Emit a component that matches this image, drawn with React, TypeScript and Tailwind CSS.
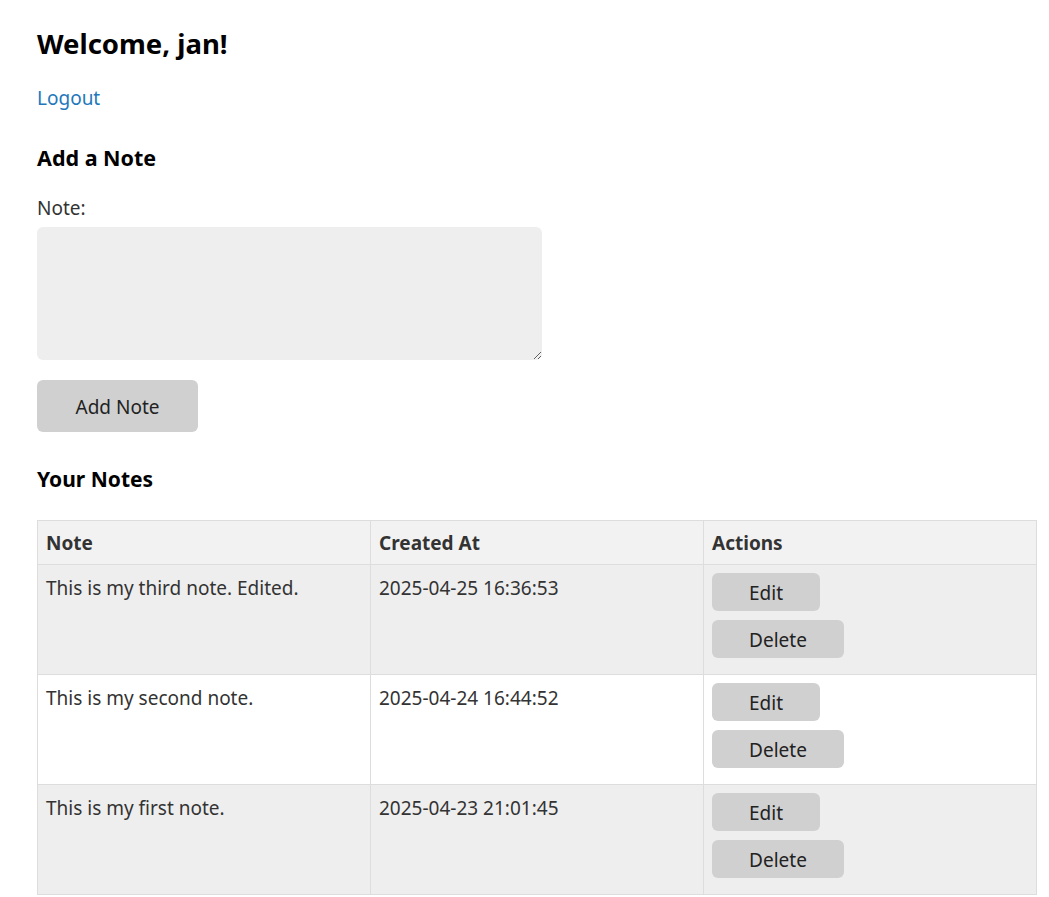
import React from "react";

const notes = [
  { text: "This is my third note. Edited.", date: "2025-04-25 16:36:53", bg: "bg-[#eeeeee]" },
  { text: "This is my second note.", date: "2025-04-24 16:44:52", bg: "bg-white" },
  { text: "This is my first note.", date: "2025-04-23 21:01:45", bg: "bg-[#eeeeee]" },
];

export default function App() {
  return (
    <div className="min-h-[897px] bg-white px-[37px] pt-[26px] text-[#333333] font-['Noto_Sans',sans-serif] text-[19px]">
      <h1 className="text-[27.5px] leading-[36px] font-bold text-black">Welcome, jan!</h1>
      <a href="#" className="mt-[24px] block w-fit text-[#2277bb] leading-[24px]">Logout</a>
      <h2 className="mt-[34px] text-[21.5px] leading-[28px] font-bold text-black">Add a Note</h2>
      <label className="mt-[24px] block leading-[24px]">Note:</label>
      <textarea className="mt-[7px] block w-[505px] h-[133px] rounded-[6px] bg-[#eeeeee] outline-none border-0 p-2" />
      <button className="mt-[20px] block w-[161px] h-[52px] pt-[3px] rounded-[6px] bg-[#d0d0d0] text-[#222222]">Add Note</button>
      <h2 className="mt-[33px] text-[21px] leading-[28px] font-bold text-black">Your Notes</h2>
      <table className="mt-[27px] w-[1000px] table-fixed border-collapse">
        <thead>
          <tr className="bg-[#f2f2f2]">
            <th className="border border-[#dddddd] px-[8px] pt-[9px] pb-[7px] text-left font-bold leading-[27px]">Note</th>
            <th className="border border-[#dddddd] px-[8px] pt-[9px] pb-[7px] text-left font-bold leading-[27px]">Created At</th>
            <th className="border border-[#dddddd] px-[8px] pt-[9px] pb-[7px] text-left font-bold leading-[27px]">Actions</th>
          </tr>
        </thead>
        <tbody>
          {notes.map((n) => (
            <tr key={n.date} className={n.bg}>
              <td className="border border-[#dddddd] px-[8px] pt-[10px] pb-[6px] align-top leading-[27px]">{n.text}</td>
              <td className="border border-[#dddddd] px-[8px] pt-[10px] pb-[6px] align-top leading-[27px]">{n.date}</td>
              <td className="border border-[#dddddd] p-[8px] align-top">
                <div className="flex flex-col items-start">
                  <button className="mb-[9px] w-[108px] h-[38px] pt-[2px] rounded-[6px] bg-[#d0d0d0] text-[#222222]">Edit</button>
                  <button className="mb-[8px] w-[132px] h-[38px] pt-[2px] rounded-[6px] bg-[#d0d0d0] text-[#222222]">Delete</button>
                </div>
              </td>
            </tr>
          ))}
        </tbody>
      </table>
    </div>
  );
}
